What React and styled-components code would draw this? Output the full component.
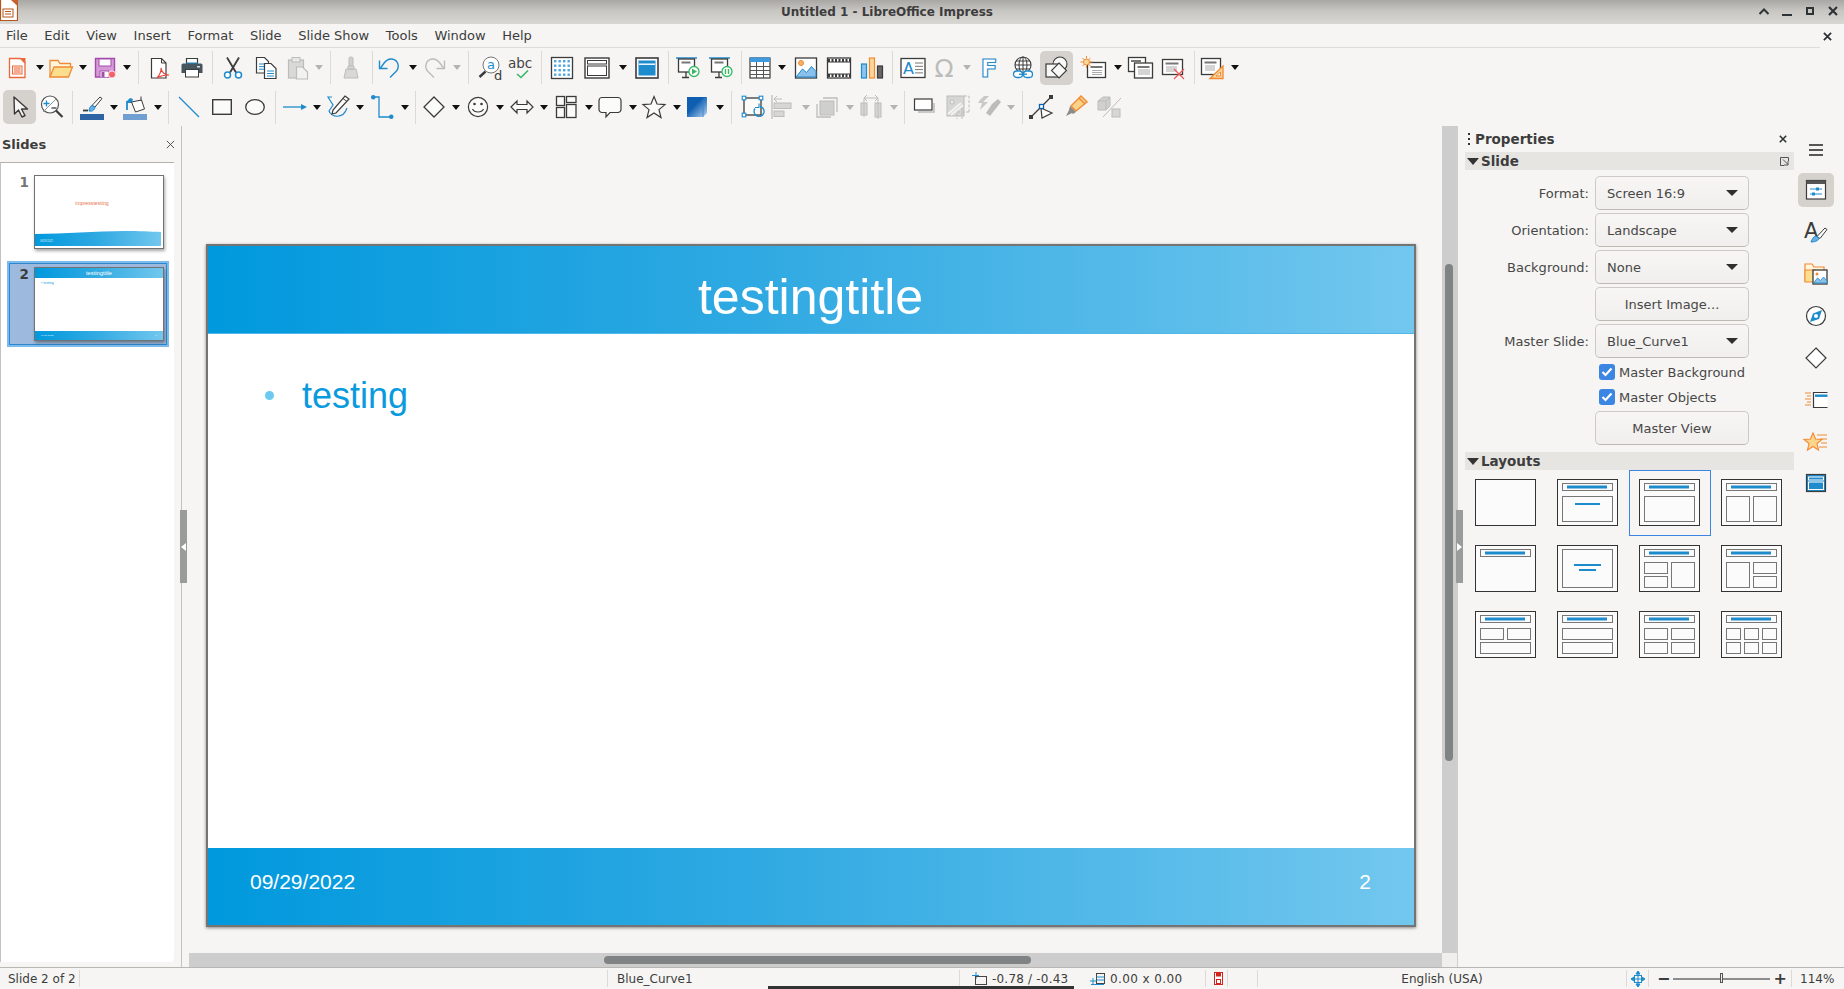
import React from 'react'
import styled, { createGlobalStyle } from 'styled-components'

const BLUE = '#1e8bcd'
const DARK = '#3b3b3b'
const DIM = '#bcbcba'
const ORANGE = '#f08a35'
const RED = '#e8443c'
const GREEN = '#37b866'
const SLIDE_GRADIENT = 'linear-gradient(90deg, #0099dd 0%, #2fa9e2 45%, #72c7ee 100%)'

const GlobalStyle = createGlobalStyle`
  html, body { margin: 0; padding: 0; height: 100%; overflow: hidden; }
  body { font-family: "DejaVu Sans", sans-serif; font-size: 13px; color: #3d3d3d; background: #f6f5f3; }
`

const Window = styled.div`
  position: relative;
  display: flex;
  flex-direction: column;
  width: 1844px;
  height: 989px;
  overflow: hidden;
  background: #f6f5f3;
`

const TitleBar = styled.header`
  position: relative;
  display: flex;
  align-items: center;
  justify-content: center;
  flex: none;
  height: 24px;
  padding-right: 70px;
  background: linear-gradient(180deg, #a8a7a4 0%, #c8c6c3 45%, #d9d7d4 100%);
  font-weight: 700;
  font-size: 12px;
  color: #3c3c3c;
`

const AppBadge = styled.svg`
  position: absolute;
  left: 0;
  top: 0;
`

const WindowButtons = styled.div`
  position: absolute;
  right: 0;
  top: 0;
  display: flex;
  height: 24px;
`

const WindowButton = styled.div`
  display: flex;
  align-items: center;
  justify-content: center;
  width: 23px;
  height: 22px;
`

const MenuBar = styled.nav`
  position: relative;
  display: flex;
  align-items: center;
  flex: none;
  height: 23px;
  padding-left: 6px;
  gap: 16.6px;
  &::after {
    content: '';
    position: absolute;
    left: 0;
    bottom: -1px;
    width: 1820px;
    height: 1px;
    background: #dedcd9;
  }
`

const MenuItem = styled.span`
  color: #3d3d3d;
`

const DocClose = styled.div`
  position: absolute;
  left: 1823px;
  top: 8px;
  display: flex;
`

const ToolRow = styled.div`
  display: flex;
  align-items: center;
  flex: none;
  height: ${p => p.$h}px;
`

const Slot = styled.div`
  display: flex;
  align-items: center;
  justify-content: center;
  flex: none;
  width: ${p => p.$w}px;
  margin-left: ${p => p.$gap}px;
  height: ${p => (p.$active ? 34 : 24)}px;
  background: ${p => (p.$active ? '#d5d1cc' : 'transparent')};
  border-radius: ${p => (p.$active ? 5 : 0)}px;
`

const ToolSep = styled.div`
  flex: none;
  width: 1px;
  margin-left: ${p => p.$gap}px;
  height: 33px;
  background: #dcdad7;
`

const Caret = styled.div`
  flex: none;
  width: 0;
  height: 0;
  margin-left: ${p => p.$gap}px;
  border-left: 4px solid transparent;
  border-right: 4px solid transparent;
  border-top: 5px solid ${p => (p.$dim ? '#b4b4b2' : '#111')};
`

const Main = styled.main`
  display: flex;
  flex: 1;
  min-height: 0;
`

const SlidesPanel = styled.aside`
  display: flex;
  flex-direction: column;
  flex: none;
  width: 181px;
  border-right: 1px solid #c4c2bf;
`

const SlidesHead = styled.div`
  display: flex;
  align-items: center;
  justify-content: space-between;
  flex: none;
  height: 36px;
  padding: 0 6px 0 2px;
  font-weight: 700;
`

const SlideList = styled.div`
  flex: none;
  width: 174px;
  height: 800px;
  padding-top: 12px;
  box-sizing: border-box;
  background: #fff;
  border-top: 1px solid #b3b1ae;
  border-left: 1px solid #c4c2bf;
  border-radius: 0 0 4px 0;
`

const SlideEntry = styled.div`
  display: flex;
  align-items: flex-start;
  box-sizing: border-box;
  width: 160px;
  margin-left: 7px;
  margin-bottom: 13px;
  height: ${p => (p.$selected ? 84 : 74)}px;
  padding-top: ${p => (p.$selected ? 3 : 0)}px;
  background: ${p => (p.$selected ? '#9dbade' : 'transparent')};
  border: ${p => (p.$selected ? '2px solid #2f86cf' : '0')};
  outline: ${p => (p.$selected ? '2px solid #7cbcec' : '0')};
  outline-offset: -1px;
`

const SlideNo = styled.span`
  flex: none;
  width: ${p => (p.$selected ? 24 : 26)}px;
  padding-right: 5px;
  box-sizing: border-box;
  text-align: right;
  font-weight: 700;
  font-size: 13.5px;
  line-height: 14px;
  color: ${p => (p.$selected ? '#3c3c3c' : '#757575')};
`

const Mini = styled.div`
  position: relative;
  display: flex;
  flex-direction: column;
  flex: none;
  box-sizing: border-box;
  width: 130px;
  height: 74px;
  background: #fff;
  border: 1px solid #727272;
  box-shadow: 1px 2px 3px rgba(0, 0, 0, 0.35);
`

const MiniHead = styled.div`
  flex: none;
  height: 10px;
  background: ${SLIDE_GRADIENT};
  color: #fff;
  font: 5.8px/10px "Liberation Sans", sans-serif;
  text-align: center;
`

const MiniBody = styled.div`
  flex: 1;
  padding: 2px 0 0 6px;
  color: #1ba0e2;
  font: 3.6px/6px "Liberation Sans", sans-serif;
`

const MiniTitle = styled.div`
  flex: 1;
  padding: 24px 14px 0 0;
  text-align: center;
  color: #e8744c;
  font: 5.2px/6px "Liberation Sans", sans-serif;
`

const MiniFoot = styled.div`
  display: flex;
  align-items: center;
  justify-content: space-between;
  flex: none;
  height: 9px;
  padding: 0 6px;
  background: ${SLIDE_GRADIENT};
  color: #d8f0fb;
  font: 2.5px/9px "Liberation Sans", sans-serif;
`

const MiniWave = styled.svg`
  position: absolute;
  left: 0;
  bottom: 2px;
`

const Canvas = styled.section`
  flex: 1;
  min-width: 0;
  display: flex;
  flex-direction: column;
`

const CanvasTop = styled.div`
  display: flex;
  flex: 1;
  min-height: 0;
`

const CanvasView = styled.div`
  flex: 1;
  padding: 118px 0 0 24px;
`

const Slide = styled.article`
  display: flex;
  flex-direction: column;
  box-sizing: border-box;
  width: 1210px;
  height: 683px;
  background: #fff;
  border: 2px solid #747474;
  box-shadow: 0 1px 3px rgba(0, 0, 0, 0.45);
  font-family: "Liberation Sans", Arial, sans-serif;
`

const SlideHeader = styled.div`
  flex: none;
  box-sizing: border-box;
  height: 88px;
  padding: 16px 1px 0 0;
  background: ${SLIDE_GRADIENT};
  border-bottom: 1px solid #4fb8e8;
  color: #fff;
  font-size: 50px;
  line-height: 70px;
  text-align: center;
`

const SlideBody = styled.div`
  display: flex;
  align-items: flex-start;
  flex: 1;
  padding: 41px 0 0 57px;
  gap: 28px;
  color: #0a9ade;
  font-size: 36px;
  line-height: 41px;
`

const Bullet = styled.span`
  flex: none;
  width: 9px;
  height: 9px;
  margin-top: 16px;
  border-radius: 50%;
  background: #6ccaf0;
`

const SlideFooter = styled.div`
  display: flex;
  align-items: center;
  justify-content: space-between;
  flex: none;
  box-sizing: border-box;
  height: 77px;
  padding: 0 43px 10px 42px;
  background: ${SLIDE_GRADIENT};
  color: #fff;
  font-size: 21px;
`

const HScrollRow = styled.div`
  display: flex;
  flex: none;
  height: 14px;
  margin-left: 7px;
`

const HTrack = styled.div`
  flex: 1;
  display: flex;
  align-items: center;
  background: #cdcdcd;
  padding-left: 415px;
`

const HThumb = styled.div`
  width: 427px;
  height: 8px;
  border-radius: 4px;
  background: #7f8383;
`

const Corner = styled.div`
  flex: none;
  width: 15px;
  background: #f0efed;
`

const VScroll = styled.div`
  flex: none;
  box-sizing: border-box;
  width: 15px;
  padding: 138px 0 0 3px;
  background: #cdcdcd;
`

const VThumb = styled.div`
  width: 8px;
  height: 497px;
  border-radius: 4px;
  background: #7f8383;
`

const Handle = styled.div`
  position: absolute;
  top: 510px;
  left: ${p => p.$left}px;
  display: flex;
  align-items: center;
  justify-content: center;
  width: 7px;
  height: 73px;
  background: #9a9c9c;
  &::after {
    content: '';
    border-top: 4px solid transparent;
    border-bottom: 4px solid transparent;
    ${p => (p.$flip ? 'border-left: 5px solid #fff;' : 'border-right: 5px solid #fff;')}
  }
`

const Sidebar = styled.aside`
  display: flex;
  flex: none;
  box-sizing: border-box;
  width: 387px;
  border-left: 1px solid #d0cecb;
`

const Deck = styled.div`
  flex: none;
  width: 329px;
  padding-left: 7px;
`

const DeckTitle = styled.div`
  display: flex;
  align-items: center;
  box-sizing: border-box;
  width: 329px;
  height: 26px;
  padding: 0 7px 0 3px;
  gap: 5px;
  font-weight: 700;
  font-size: 13.5px;
`

const Grip = styled.span`
  flex: none;
  width: 2px;
  height: 12px;
  background: repeating-linear-gradient(180deg, #333 0 2px, transparent 2px 5px);
`

const DeckName = styled.span`
  flex: 1;
`

const SectionHead = styled.div`
  display: flex;
  align-items: center;
  justify-content: space-between;
  box-sizing: border-box;
  width: 329px;
  height: 18px;
  padding: 0 4px 0 2px;
  background: #e6e5e2;
  font-weight: 700;
  font-size: 13.5px;
`

const SectionLabel = styled.span`
  display: flex;
  align-items: center;
  gap: 2px;
  &::before {
    content: '';
    border-left: 6px solid transparent;
    border-right: 6px solid transparent;
    border-top: 7px solid #333;
  }
`

const Form = styled.div`
  display: grid;
  grid-template-columns: 124px 154px;
  column-gap: 6px;
  row-gap: 3px;
  padding: 6px 0 7px;
`

const FieldLabel = styled.label`
  display: flex;
  align-items: center;
  justify-content: flex-end;
  color: #474747;
`

const Control = styled.div`
  grid-column: 2;
  display: flex;
  align-items: center;
  justify-content: ${p => (p.$center ? 'center' : 'space-between')};
  box-sizing: border-box;
  height: 34px;
  padding: ${p => (p.$center ? '0' : '0 10px 0 11px')};
  background: linear-gradient(180deg, #f7f6f4, #f0efed);
  border: 1px solid #cdcac5;
  border-bottom-color: #bdb9b3;
  border-radius: 5px;
  color: #474747;
`

const SelectArrow = styled.span`
  border-left: 6px solid transparent;
  border-right: 6px solid transparent;
  border-top: 6px solid #2f2f2f;
`

const CheckRow = styled.div`
  grid-column: 2;
  display: flex;
  align-items: center;
  gap: 4px;
  height: 22px;
  padding-left: 4px;
  color: #474747;
`

const CheckBox = styled.span`
  display: flex;
  align-items: center;
  justify-content: center;
  flex: none;
  width: 16px;
  height: 16px;
  border-radius: 3px;
  background: #3b85e3;
`

const LayoutGrid = styled.div`
  display: grid;
  grid-template-columns: repeat(4, 82px);
  grid-auto-rows: 66px;
`

const LayoutCell = styled.div`
  display: flex;
  align-items: center;
  justify-content: center;
  box-sizing: border-box;
  border: 1px solid ${p => (p.$selected ? '#3b85e3' : 'transparent')};
  padding: 0 1px 1px 0;
`

const TabBar = styled.div`
  display: flex;
  flex-direction: column;
  align-items: center;
  flex: none;
  width: 44px;
`

const TabButton = styled.div`
  display: flex;
  align-items: center;
  justify-content: center;
  flex: none;
  box-sizing: border-box;
  width: 36px;
  height: ${p => p.$h || 42}px;
  margin-bottom: ${p => p.$mb || 0}px;
  background: ${p => (p.$active ? '#d5d1cc' : 'transparent')};
  border-radius: 5px;
`

const StatusBar = styled.footer`
  display: flex;
  align-items: center;
  flex: none;
  height: 21px;
  border-top: 1px solid #b9b7b4;
  font-size: 12px;
  color: #3d3d3d;
`

const StatusCell = styled.div`
  display: flex;
  align-items: center;
  justify-content: ${p => p.$justify || 'flex-start'};
  flex: none;
  box-sizing: border-box;
  width: ${p => p.$w}px;
  height: 17px;
  padding-left: ${p => p.$pad || 0}px;
  gap: ${p => p.$gap || 0}px;
  letter-spacing: ${p => p.$track || 0}px;
  border-right: ${p => (p.$plain ? '0' : '1px solid #dcdad7')};
`

const ZoomSlider = styled.div`
  position: relative;
  flex: none;
  width: 97px;
  height: 2px;
  margin: 0 3px;
  background: #8d8d8d;
  &::after {
    content: '';
    position: absolute;
    left: 47px;
    top: -5px;
    width: 3px;
    height: 10px;
    box-sizing: border-box;
    border: 1px solid #555;
    background: #eee;
  }
`

const ZoomSign = styled.span`
  font-size: 16px;
  font-weight: 700;
  line-height: 17px;
`

const TaskStrip = styled.div`
  position: absolute;
  left: 768px;
  bottom: 0;
  width: 306px;
  height: 3px;
  background: #333;
`

/* toolbar icons: all drawn on a 24 box */
const Ico = ({ children, size = 24, w, h, box }) => (
  <svg width={w || size} height={h || size} viewBox={box || '0 0 24 24'} fill="none" style={{ overflow: 'visible', flex: 'none' }}>
    {children}
  </svg>
)

const Lines = ({ x, y, w, n = 3, c = DARK, step = 2.5 }) => (
  <>
    {Array.from({ length: n }, (_, i) => (
      <path key={i} d={`M${x} ${y + i * step}h${w}`} stroke={c} strokeWidth="1" />
    ))}
  </>
)

const icons = {
  newDoc: (
    <Ico>
      <path d="M4.5 2.5h11l4.5 4.5v14.5H4.5z" fill="#fff" stroke="#e9683c" strokeWidth="1.3" />
      <path d="M15 2h5.5v5.5z" fill="#e9683c" />
      <rect x="7.5" y="10" width="9.5" height="8" stroke="#e9683c" strokeWidth="1" fill="#fdeee8" />
      <Lines x={9} y={12} w={6.5} n={3} c="#e9683c" step={2} />
    </Ico>
  ),
  open: (
    <Ico>
      <path d="M1 21V4.5h8l2 3h10.5V11" stroke={ORANGE} strokeWidth="1.3" fill="#fff6dc" />
      <path d="M1 21l4-10h18.5l-4 10z" fill="#fbdf8f" stroke={ORANGE} strokeWidth="1.3" />
    </Ico>
  ),
  save: (
    <Ico>
      <path d="M2.5 2.5h19v15l-3 3.5H2.5z" fill="#d79ad8" stroke="#a34dab" strokeWidth="1.4" />
      <rect x="6" y="3" width="12" height="7" fill="#fff" stroke="#a34dab" />
      <path d="M7 21v-6h9v6" fill="#fff" stroke="#a34dab" />
      <rect x="8.5" y="16" width="3" height="5" fill="#a34dab" />
      <circle cx="19" cy="18.5" r="3.6" fill="#f0636a" stroke="#fff" strokeWidth=".8" />
    </Ico>
  ),
  pdf: (
    <Ico>
      <path d="M4.5 2.5h10l4.5 4.5v15H4.5z" fill="#fff" stroke={DARK} strokeWidth="1.2" />
      <path d="M14.5 2.5v4.5h4.5" stroke={DARK} />
      <path d="M10 22c3-3 4.5-8 4-10 0 4 4 7 8 7-4 0-9 1-12 3z" stroke={RED} strokeWidth="1.2" fill="#fff" />
    </Ico>
  ),
  print: (
    <Ico>
      <path d="M6.5 8V2.5h11V8" fill="#fff" stroke={DARK} strokeWidth="1.2" />
      <path d="M6.5 6.5h11V8h-11z" fill={BLUE} />
      <path d="M1.5 9c0-1 1-1.5 2-1.5h17c1 0 2 .5 2 1.5v8h-21z" fill="#47555f" />
      <rect x="5.5" y="13.5" width="13" height="7.5" fill="#fff" stroke={DARK} />
      <rect x="17" y="10" width="3" height="1.5" fill="#ddd" />
    </Ico>
  ),
  cut: (
    <Ico>
      <path d="M6 1.5l9 15M18 1.5l-9 15" stroke={DARK} strokeWidth="1.8" />
      <circle cx="6.5" cy="19" r="3" fill="#fff" stroke={BLUE} strokeWidth="1.5" />
      <circle cx="17.5" cy="19" r="3" fill="#fff" stroke={BLUE} strokeWidth="1.5" />
    </Ico>
  ),
  copy: (
    <Ico>
      <path d="M2.5 1.5h8l4 4V17H2.5z" fill="#fff" stroke={DARK} strokeWidth="1.2" />
      <Lines x={5} y={8} w={6} n={3} c={BLUE} step={2.6} />
      <path d="M10.5 7.5H17l5 5v10H10.5z" fill="#fff" stroke={DARK} strokeWidth="1.2" />
      <Lines x={13} y={15} w={7} n={3} c={BLUE} step={2.5} />
    </Ico>
  ),
  paste: (
    <Ico>
      <rect x="2.5" y="4" width="15" height="18" fill="#d9d9d7" stroke={DIM} strokeWidth="1.2" />
      <rect x="6" y="1.5" width="8" height="4.5" fill="#e8e8e6" stroke={DIM} />
      <path d="M10.5 11h6l5 5v7h-11z" fill="#f2f2f0" stroke={DIM} strokeWidth="1.2" />
    </Ico>
  ),
  clone: (
    <Ico>
      <rect x="10" y="1" width="4" height="9" rx="1.5" fill="#d0d0ce" stroke={DIM} />
      <path d="M9 10h6v3H9zM7 13h10l2 9H5z" fill="#d8d8d6" stroke={DIM} />
    </Ico>
  ),
  undo: (
    <Ico>
      <path d="M12 21.5l6-6c4-4 2.5-11.5-4-12.5-3-.4-5.5 1-7.5 3.5L2.5 12" stroke={BLUE} strokeWidth="1.4" />
      <path d="M1.5 4.5v8h8" stroke={BLUE} strokeWidth="1.4" />
    </Ico>
  ),
  redo: (
    <Ico>
      <path d="M12 21.5l-6-6c-4-4-2.5-11.5 4-12.5 3-.4 5.5 1 7.5 3.5L21.5 12" stroke={DIM} strokeWidth="1.4" />
      <path d="M22.5 4.5v8h-8" stroke={DIM} strokeWidth="1.4" />
    </Ico>
  ),
  find: (
    <Ico>
      <circle cx="13" cy="9" r="8" fill="#fff" stroke="#777" strokeWidth="1" />
      <path d="M7.5 15.5L1.5 21" stroke={DARK} strokeWidth="2.4" />
      <text x="9" y="13" fontSize="13" fill={BLUE} fontFamily="DejaVu Sans">a</text>
      <text x="16" y="24" fontSize="13" fill={DARK} fontFamily="DejaVu Sans">d</text>
    </Ico>
  ),
  spell: (
    <Ico>
      <text x="-1" y="12" fontSize="13.5" fill="#444" fontFamily="DejaVu Sans">abc</text>
      <path d="M8 18l4 3.5 7-7" stroke={GREEN} strokeWidth="1.6" />
    </Ico>
  ),
  grid: (
    <Ico>
      <rect x="1.5" y="1.5" width="21" height="21" fill="#fff" stroke={DARK} strokeWidth="1.3" />
      {[5, 9.5, 14, 18.5].map(y =>
        [5, 9.5, 14, 18.5].map(x => <rect key={`${x}-${y}`} x={x - 1} y={y - 1} width="2.4" height="2.4" fill="#4fa6e0" />)
      )}
    </Ico>
  ),
  header: (
    <Ico w={26} h={24} box="0 0 26 24">
      <rect x="1" y="2" width="24" height="20" fill="#fff" stroke={DARK} strokeWidth="1.4" />
      <rect x="3.5" y="4.5" width="19" height="3.5" stroke={DARK} />
      <rect x="3.5" y="10" width="19" height="9.5" stroke={DARK} />
    </Ico>
  ),
  master: (
    <Ico>
      <rect x="1" y="2" width="22" height="20" fill="#fff" stroke={DARK} strokeWidth="1.6" />
      <rect x="3.5" y="4.5" width="17" height="15" fill={BLUE} />
      <rect x="4" y="7.5" width="16" height="1.4" fill="#fff" />
    </Ico>
  ),
  start: (
    <Ico>
      <path d="M0 2h21" stroke={BLUE} strokeWidth="1.5" />
      <rect x="2.5" y="3" width="16" height="13" fill="#fff" stroke={DARK} strokeWidth="1.3" />
      <rect x="5.5" y="5.5" width="9" height="2" fill="#777" />
      <path d="M10 16v5M6 21.5h7" stroke={DARK} strokeWidth="1.3" />
      <circle cx="18" cy="15.5" r="5" fill="#fff" stroke={GREEN} strokeWidth="1.3" />
      <path d="M16 12.5l5 3-5 3z" fill={GREEN} />
    </Ico>
  ),
  pause: (
    <Ico>
      <path d="M0 2h21" stroke={BLUE} strokeWidth="1.5" />
      <rect x="2.5" y="3" width="16" height="13" fill="#fff" stroke={DARK} strokeWidth="1.3" />
      <rect x="5.5" y="5.5" width="9" height="2" fill="#777" />
      <path d="M10 16v5M6 21.5h7" stroke={DARK} strokeWidth="1.3" />
      <circle cx="18" cy="15.5" r="5" fill="#fff" stroke={GREEN} strokeWidth="1.3" />
      <path d="M16.5 13v5M19.5 13v5" stroke={GREEN} strokeWidth="1.4" />
    </Ico>
  ),
  table: (
    <Ico>
      <rect x="2" y="2" width="20" height="20" fill="#fff" stroke={DARK} strokeWidth="1.2" />
      <rect x="2" y="1.5" width="20" height="4.5" fill="#3f9ae0" />
      <path d="M2 10.5h20M2 14.5h20M2 18.5h20M8.5 6v16M15.5 6v16" stroke="#555" strokeWidth="1" />
    </Ico>
  ),
  image: (
    <Ico>
      <rect x="1.5" y="2" width="21" height="20" fill="#fff" stroke={DARK} strokeWidth="1.3" />
      <circle cx="7" cy="7" r="2.5" fill="#f7b267" stroke={ORANGE} />
      <path d="M2 21l6.5-8 4 3.5 5-6 4.5 5V21z" fill="#8ac0ea" stroke={BLUE} />
    </Ico>
  ),
  media: (
    <Ico>
      <rect x="0.5" y="2" width="23" height="20" fill="#fff" stroke={DARK} strokeWidth="1.3" />
      <path d="M1 4.5h22M1 19.5h22" stroke={DARK} strokeWidth="3" strokeDasharray="2 1.5" />
      <path d="M1 6h22M1 18h22" stroke={DARK} strokeWidth="1" />
    </Ico>
  ),
  chart: (
    <Ico>
      <rect x="1.5" y="8" width="5" height="14" fill="#8cc4ee" stroke={BLUE} strokeWidth="1.2" />
      <rect x="9.5" y="2" width="5" height="20" fill="#fbd59a" stroke={ORANGE} strokeWidth="1.2" />
      <rect x="17.5" y="10" width="5" height="12" fill="#666" stroke={DARK} strokeWidth="1.2" />
    </Ico>
  ),
  textbox: (
    <Ico w={26} h={24} box="0 0 26 24">
      <rect x="1" y="2.5" width="24" height="19" fill="#fff" stroke={DARK} strokeWidth="1.3" />
      <text x="3" y="18" fontSize="16" fill={BLUE} fontFamily="DejaVu Sans">A</text>
      <Lines x={15} y={7} w={8} n={4} c="#777" step={3.3} />
    </Ico>
  ),
  omega: (
    <Ico>
      <text x="12" y="21" textAnchor="middle" fontSize="25" fill={DIM} fontFamily="DejaVu Sans">Ω</text>
    </Ico>
  ),
  fontwork: (
    <Ico>
      <text x="12" y="21" textAnchor="middle" fontSize="25" fontWeight="700" fill="#fff" stroke={BLUE} strokeWidth="1.1" fontFamily="DejaVu Sans">F</text>
    </Ico>
  ),
  link: (
    <Ico>
      <circle cx="12" cy="9" r="8" fill="#fff" stroke={DARK} strokeWidth="1.1" />
      <ellipse cx="12" cy="9" rx="4" ry="8" stroke={DARK} />
      <path d="M4 9h16M5 5h14M5 13h14M12 1v16" stroke={DARK} />
      <rect x="2.5" y="15" width="9" height="6.5" rx="3.2" fill="#fff" stroke={BLUE} strokeWidth="1.3" />
      <rect x="12.5" y="15" width="9" height="6.5" rx="3.2" fill="#fff" stroke={BLUE} strokeWidth="1.3" />
      <path d="M8 18.2h8" stroke={BLUE} strokeWidth="1.3" />
    </Ico>
  ),
  shapes: (
    <Ico>
      <circle cx="15" cy="8" r="7" fill="#f8f8f7" stroke={DARK} strokeWidth="1.1" />
      <rect x="1" y="8" width="13" height="13" fill="#f8f8f7" stroke={DARK} strokeWidth="1.2" />
      <path d="M14 7l7.5 7.5L14 22l-7.5-7.5z" fill="#f8f8f7" stroke={DARK} strokeWidth="1.1" />
    </Ico>
  ),
  newSlide: (
    <Ico w={26} h={24} box="0 0 26 24">
      <rect x="6.5" y="6.5" width="18" height="15" fill="#fff" stroke={DARK} strokeWidth="1.3" />
      <rect x="9.5" y="10" width="12" height="2" fill="#777" />
      <Lines x={11} y={14.5} w={10} n={3} c="#aaa" step={2} />
      <circle cx="5.5" cy="6" r="3" fill="#fbd59a" stroke={ORANGE} />
      <path d="M5.5 0v2.5M5.5 9.5V12M-.5 6H2M9 6h2.5M1.5 2l1.8 1.8M7.7 8.2l1.8 1.8M1.5 10l1.8-1.8M7.7 3.8L9.5 2" stroke={ORANGE} />
    </Ico>
  ),
  dupSlide: (
    <Ico w={26} h={24} box="0 0 26 24">
      <rect x="0.5" y="1.5" width="17" height="14" fill="#fff" stroke={DARK} strokeWidth="1.3" />
      <rect x="3" y="4" width="10" height="2" fill="#777" />
      <rect x="6.5" y="7" width="18" height="15" fill="#fff" stroke={DARK} strokeWidth="1.3" />
      <rect x="9.5" y="10" width="12" height="2" fill="#777" />
      <Lines x={10} y={14} w={12} n={3} c="#aaa" step={2} />
    </Ico>
  ),
  delSlide: (
    <Ico w={26} h={24} box="0 0 26 24">
      <rect x="1.5" y="3.5" width="20" height="15" fill="#fff" stroke={DARK} strokeWidth="1.3" />
      <rect x="4.5" y="6.5" width="13" height="2" fill="#777" />
      <Lines x={5} y={11} w={11} n={3} c="#aaa" step={2} />
      <path d="M13 13l10 10M23 13L13 23" stroke="#ee5a5a" strokeWidth="1.3" />
    </Ico>
  ),
  slideLayout: (
    <Ico w={26} h={24} box="0 0 26 24">
      <rect x="1.5" y="2.5" width="19" height="16" fill="#fff" stroke={DARK} strokeWidth="1.3" />
      <rect x="4.5" y="5.5" width="12" height="2" fill="#777" />
      <Lines x={5} y={10} w={10} n={3} c="#aaa" step={2} />
      <path d="M10 22.5L23 10v12.5z" fill="#fbd59a" stroke={ORANGE} strokeWidth="1.3" />
      <path d="M16 20l4.5-4v4z" fill="#fff" stroke={ORANGE} />
    </Ico>
  ),
  select: (
    <Ico>
      <path d="M6 2l.5 17 4-4 3.5 7 3-1.5-3.5-6.5h6z" fill="#f6f5f3" stroke={DARK} strokeWidth="1.4" strokeLinejoin="round" />
    </Ico>
  ),
  zoom: (
    <Ico>
      <circle cx="10" cy="9.5" r="8.5" fill="#fff" stroke="#555" strokeWidth="1.2" />
      <path d="M3 17L17 3" stroke="#999" />
      <path d="M3.5 8.5h6M6.5 5.5v6" stroke={BLUE} strokeWidth="1.3" />
      <path d="M11.5 13h5" stroke={DARK} strokeWidth="1.3" />
      <path d="M16 15.5l6.5 6.5" stroke={DARK} strokeWidth="2.2" />
    </Ico>
  ),
  lineColor: (
    <Ico>
      <rect x="0" y="19" width="24" height="6" fill="#2f64a4" />
      <path d="M3 15.5h5" stroke={DARK} strokeWidth="1.8" />
      <path d="M20 2l2 1.5L15 12l-3-1.5z" fill="#fff" stroke={DARK} />
      <path d="M9 16c0-3 2-5.5 3-5.5l3 1.5c0 2-2 5-6 4z" fill="#6aaee5" stroke={BLUE} />
    </Ico>
  ),
  fill: (
    <Ico>
      <rect x="0" y="19" width="24" height="6" fill="#729fd2" />
      <path d="M4 15V7h5" stroke={BLUE} strokeWidth="1.8" />
      <path d="M3 7l4-4 3 1-1 3" fill={BLUE} />
      <path d="M8.5 7l10-2 3 9-9 3z" fill="#fff" stroke={DARK} />
      <path d="M18 6V1.5" stroke={DARK} />
    </Ico>
  ),
  line: (
    <Ico>
      <path d="M2 2l20 20" stroke={BLUE} strokeWidth="1.2" />
    </Ico>
  ),
  rect: (
    <Ico w={20} h={16} box="0 0 20 16">
      <rect x="0.7" y="0.7" width="18.6" height="14.6" fill="#fbfbfa" stroke={DARK} strokeWidth="1.4" />
    </Ico>
  ),
  ellipse: (
    <Ico w={20} h={16} box="0 0 20 16">
      <ellipse cx="10" cy="8" rx="9.3" ry="7.3" fill="#fbfbfa" stroke={DARK} strokeWidth="1.3" />
    </Ico>
  ),
  arrowLine: (
    <Ico>
      <path d="M0 12h20" stroke={BLUE} strokeWidth="1.3" />
      <path d="M24 12l-6-3v6z" fill={BLUE} />
    </Ico>
  ),
  curve: (
    <Ico>
      <path d="M5 2H1l5 8-4 6c2 6 14 9 18-3" stroke={BLUE} strokeWidth="1.2" />
      <path d="M18 1l4 3-13 14-4 1 1-4z" fill="#fff" stroke={DARK} strokeWidth="1.2" />
      <path d="M16 3.5l4 3" stroke={DARK} />
    </Ico>
  ),
  connector: (
    <Ico>
      <path d="M3 2h6v20h11" stroke={BLUE} strokeWidth="1.3" />
      <rect x="1" y="0" width="4.5" height="4.5" rx="2.2" fill={BLUE} />
      <rect x="19" y="19.5" width="4.5" height="4.5" rx="2.2" fill={BLUE} />
    </Ico>
  ),
  diamond: (
    <Ico>
      <path d="M12 2l10 10-10 10L2 12z" fill="#fbfbfa" stroke={DARK} strokeWidth="1.3" />
    </Ico>
  ),
  smiley: (
    <Ico>
      <circle cx="12" cy="12" r="9.6" fill="#fbfbfa" stroke={DARK} strokeWidth="1.2" />
      <circle cx="8.5" cy="9" r="1.3" fill={DARK} />
      <circle cx="15.5" cy="9" r="1.3" fill={DARK} />
      <path d="M6.5 14c2 4 9 4 11 0" stroke={DARK} strokeWidth="1.2" />
    </Ico>
  ),
  dblArrow: (
    <Ico>
      <path d="M1 12l6-6v3.5h10V6l6 6-6 6v-3.5H7V18z" fill="#fbfbfa" stroke={DARK} strokeWidth="1.2" />
    </Ico>
  ),
  flow: (
    <Ico>
      <rect x="2.5" y="1.5" width="8" height="9" fill="#fbfbfa" stroke={DARK} strokeWidth="1.3" />
      <rect x="12.5" y="1.5" width="9.5" height="6" fill="#fbfbfa" stroke={DARK} strokeWidth="1.3" />
      <rect x="2.5" y="12.5" width="8" height="10" fill="#fbfbfa" stroke={DARK} strokeWidth="1.3" />
      <rect x="12.5" y="9.5" width="9.5" height="13" fill="#fbfbfa" stroke={DARK} strokeWidth="1.3" />
    </Ico>
  ),
  callout: (
    <Ico>
      <path d="M4 2.5h16c1.5 0 3 1.5 3 3v9c0 1.5-1.5 3-3 3H12l-4 4.5v-4.5H4c-1.5 0-3-1.5-3-3v-9c0-1.5 1.5-3 3-3z" fill="#fbfbfa" stroke={DARK} strokeWidth="1.2" />
    </Ico>
  ),
  star: (
    <Ico>
      <path d="M12 1.5l3 7.5 8 .6-6 5 2 8L12 18l-7 4.6 2-8-6-5L9 9z" fill="#fbfbfa" stroke={DARK} strokeWidth="1.2" />
    </Ico>
  ),
  extrude3d: (
    <Ico>
      <defs>
        <linearGradient id="cube3d" x1="0" y1="0" x2="1" y2="1">
          <stop offset="0.4" stopColor="#0f5fb0" />
          <stop offset="1" stopColor="#b5d4f0" />
        </linearGradient>
      </defs>
      <path d="M1 2h20v16l-4 4H1z" fill="url(#cube3d)" />
      <path d="M17 22V6l4-4" stroke="#3a80c8" strokeWidth=".8" />
    </Ico>
  ),
  rotate: (
    <Ico>
      <rect x="3" y="3" width="17" height="17" fill="#fbfbfa" stroke={DARK} strokeWidth="1.3" />
      {[[3, 3], [20, 3], [3, 20]].map(([x, y]) => (
        <rect key={`${x}${y}`} x={x - 1.8} y={y - 1.8} width="3.6" height="3.6" fill="#fff" stroke={BLUE} strokeWidth="1.1" />
      ))}
      <path d="M19 11.5a5 5 0 1 1-5 2" stroke={BLUE} strokeWidth="1.3" />
      <path d="M18 8.5v4h-4" stroke={BLUE} strokeWidth="1.1" />
    </Ico>
  ),
  align: (
    <Ico>
      <path d="M1 0v24" stroke={DIM} strokeWidth="1.3" />
      <rect x="3" y="8" width="17" height="5.5" fill="#d6d6d4" stroke={DIM} />
      <rect x="3" y="16" width="10" height="5.5" fill="#d6d6d4" stroke={DIM} />
      <path d="M11 4H3M6 1L3 4l3 3" stroke={DIM} />
    </Ico>
  ),
  arrange: (
    <Ico>
      <path d="M8 3h14v14M2 9v13h14" stroke={DIM} strokeWidth="1.3" />
      <rect x="5" y="6" width="14" height="14" fill="#cfcfcd" stroke={DIM} />
    </Ico>
  ),
  distribute: (
    <Ico>
      <rect x="2" y="8" width="6" height="12" fill="#d6d6d4" stroke={DIM} />
      <rect x="16" y="8" width="6" height="14" fill="#d6d6d4" stroke={DIM} />
      <path d="M5 3v19M19 3v21M5 3h14M8 0L5 3l3 3M16 0l3 3-3 3" stroke={DIM} />
    </Ico>
  ),
  shadow: (
    <Ico>
      <path d="M21 8v9H5" stroke="#c9c9c7" strokeWidth="2" />
      <rect x="1.5" y="4" width="17.5" height="11" fill="#fff" stroke={DARK} strokeWidth="1.2" />
    </Ico>
  ),
  crop: (
    <Ico>
      <rect x="1" y="1" width="17" height="20" fill="#d6d6d4" stroke={DIM} />
      <circle cx="6" cy="7" r="2" fill="#eee" stroke={DIM} />
      <path d="M2 19L15 8M5 20l12-10" stroke="#f3f3f1" strokeWidth="2" />
      <path d="M18 1h5v16M23 17H11v7M16 13v11" stroke={DIM} strokeDasharray="3 1.5" />
    </Ico>
  ),
  filter: (
    <Ico>
      <path d="M15 9l6-5 3 3-11 14-4-3z" fill="#bcbcba" />
      <path d="M3 5l4-4h5l-6 6h5l-8 8 2-7H1z" fill="#c8c8c6" />
    </Ico>
  ),
  points: (
    <Ico>
      <path d="M1 22L21 2" stroke={DARK} strokeWidth="1.2" />
      <rect x="-1" y="20" width="4" height="4" fill={DARK} />
      <rect x="19" y="0" width="4" height="4" fill={DARK} />
      <path d="M11 13l11 5-10 5z" fill="#fbfbfa" stroke={DARK} strokeWidth="1.2" />
      <rect x="9.5" y="9.5" width="4" height="4" fill="#fff" stroke="#0b5fb0" strokeWidth="1.3" />
    </Ico>
  ),
  glue: (
    <Ico>
      <path d="M17 1l6 6-11 9-5-5z" fill="#fbd28a" stroke={ORANGE} strokeWidth="1.4" />
      <path d="M6 11l6 6-3 2-4-4zM5 15l3 3-6 3z" fill="#8a8a88" />
      <path d="M15 3l6 6" stroke={ORANGE} strokeWidth="1.5" />
    </Ico>
  ),
  extrusion: (
    <Ico>
      <path d="M1 6l5-4h7v9l-4 4H1z" fill="#d0d0ce" stroke={DIM} />
      <path d="M1 6h8v9M9 6l4-4" stroke={DIM} />
      <path d="M6 22L24 3" stroke={DIM} />
      <rect x="15" y="14" width="8" height="8" fill="#d6d6d4" stroke={DIM} />
    </Ico>
  )
}

const railIcons = {
  properties: (
    <Ico>
      <rect x="2.5" y="2.5" width="19" height="18.5" fill="#fff" stroke={DARK} strokeWidth="1.2" />
      <rect x="2.5" y="2.5" width="19" height="3.5" fill="#555" />
      <path d="M6 11h12M6 16h12" stroke={BLUE} />
      <rect x="12" y="9.5" width="3" height="3" fill={BLUE} />
      <rect x="8" y="14.5" width="3" height="3" fill={BLUE} />
    </Ico>
  ),
  styles: (
    <Ico>
      <text x="0" y="18" fontSize="21" fill={DARK} fontFamily="DejaVu Sans">A</text>
      <path d="M21 8l2 1.5-7 9-3-2z" fill="#fff" stroke={DARK} />
      <path d="M7 22c1-3 3-6 5-6l3 2c0 2-3 4-8 4z" fill="#6aaee5" stroke={BLUE} />
    </Ico>
  ),
  gallery: (
    <Ico>
      <path d="M1 20V2h7l2 3h10v5" fill="#fff6dc" stroke={ORANGE} strokeWidth="1.2" />
      <rect x="1" y="8" width="10" height="12" fill="#fbdf8f" stroke={ORANGE} />
      <rect x="9" y="8" width="14" height="14" fill="#fff" stroke={DARK} strokeWidth="1.3" />
      <circle cx="13" cy="12" r="1.5" fill={ORANGE} />
      <path d="M9.5 21l4-5 3 2.5 3-3.5 3.5 4v2z" fill="#8ac0ea" stroke={BLUE} strokeWidth=".8" />
    </Ico>
  ),
  navigator: (
    <Ico>
      <circle cx="12" cy="12" r="9.5" fill="#fff" stroke={DARK} strokeWidth="1.2" />
      <path d="M18 6l-9 3.5L6 18l9-3z" fill={BLUE} />
      <circle cx="12" cy="12" r="2" fill="#fff" />
    </Ico>
  ),
  shapes: (
    <Ico>
      <path d="M12 2l10 10-10 10L2 12z" fill="#fff" stroke={DARK} strokeWidth="1.2" />
    </Ico>
  ),
  animation: (
    <Ico>
      <path d="M23.5 4.5h-14v15h14" fill="#fff" stroke={DARK} strokeWidth="1.2" />
      <rect x="11" y="6.5" width="12.5" height="2.4" fill={BLUE} />
      <path d="M1 5h6M3 8h4M1 11h6M3 14h4M1 17h6" stroke={ORANGE} />
    </Ico>
  ),
  transition: (
    <Ico>
      <path d="M9 3l2.5 6 6.5.5-5 4 1.5 6.5L9 16.5 3.5 20 5 13.5l-5-4L6.5 9z" fill="#fcd58d" stroke={ORANGE} strokeWidth="1.1" />
      <path d="M13 5h10M16 9h7M17 13h6M15 17h8" stroke={ORANGE} />
    </Ico>
  ),
  masterPages: (
    <Ico>
      <rect x="2.5" y="2.5" width="19" height="17" fill={BLUE} stroke={DARK} strokeWidth="1.2" />
      <rect x="4.5" y="5" width="15" height="3" fill={BLUE} stroke="#fff" />
      <rect x="4.5" y="10" width="15" height="7.5" fill={BLUE} stroke="#fff" />
    </Ico>
  )
}

const SLOT_W = 24

// each entry: [kind, centre x in the toolbar]
const withGaps = items => {
  let end = 0
  return items.map(([kind, cx]) => {
    const w = kind === 'sep' ? 1 : kind === 'arrow' || kind === 'dim' ? 8 : kind === 'shapes' || kind === 'select' ? 33 : SLOT_W
    const gap = Math.round(cx - w / 2 - end)
    end += gap + w
    return { kind, gap, w }
  })
}

const row1 = withGaps([
  ['newDoc', 17], ['arrow', 40], ['open', 61], ['arrow', 83], ['save', 105], ['arrow', 127], ['sep', 138],
  ['pdf', 159], ['print', 192], ['sep', 212], ['cut', 233], ['copy', 266], ['paste', 298], ['dim', 319], ['sep', 330],
  ['clone', 351], ['sep', 372], ['undo', 390], ['arrow', 413], ['redo', 434], ['dim', 457], ['sep', 468],
  ['find', 490], ['spell', 521], ['sep', 541], ['grid', 562], ['header', 597], ['arrow', 623], ['master', 647], ['sep', 668],
  ['start', 688], ['pause', 721], ['sep', 741], ['table', 760], ['arrow', 782], ['image', 806], ['media', 839], ['chart', 872], ['sep', 892],
  ['textbox', 913], ['omega', 944], ['dim', 967], ['fontwork', 989], ['link', 1023], ['shapes', 1056],
  ['newSlide', 1094], ['arrow', 1118], ['dupSlide', 1141], ['delSlide', 1174], ['sep', 1194], ['slideLayout', 1213], ['arrow', 1235]
])

const row2 = withGaps([
  ['select', 19], ['zoom', 52], ['sep', 72], ['lineColor', 92], ['arrow', 114], ['fill', 135], ['arrow', 158], ['sep', 168],
  ['line', 189], ['rect', 222], ['ellipse', 255], ['sep', 275], ['arrowLine', 295], ['arrow', 317], ['curve', 339], ['arrow', 360],
  ['connector', 382], ['arrow', 405], ['sep', 415], ['diamond', 434], ['arrow', 456], ['smiley', 478], ['arrow', 500],
  ['dblArrow', 522], ['arrow', 544], ['flow', 566], ['arrow', 589], ['callout', 610], ['arrow', 633], ['star', 654], ['arrow', 677],
  ['extrude3d', 698], ['arrow', 720], ['sep', 731], ['rotate', 753], ['align', 783], ['dim', 806], ['arrange', 827], ['dim', 850],
  ['distribute', 871], ['dim', 894], ['sep', 904], ['shadow', 925], ['crop', 958], ['filter', 989], ['dim', 1011], ['sep', 1022],
  ['points', 1042], ['glue', 1076], ['extrusion', 1109]
])

const Toolbar = ({ items, h }) => (
  <ToolRow $h={h}>
    {items.map(({ kind, gap, w }, i) => {
      if (kind === 'sep') return <ToolSep key={i} $gap={gap} />
      if (kind === 'arrow') return <Caret key={i} $gap={gap} />
      if (kind === 'dim') return <Caret key={i} $gap={gap} $dim />
      return (
        <Slot key={i} $gap={gap} $w={w} $active={w === 33}>
          {icons[kind]}
        </Slot>
      )
    })}
  </ToolRow>
)

// layout thumbnails: boxes are the grey placeholders, bars the blue strokes
const FULL_TITLE = { x: 5, y: 4, w: 50, h: 7 }
const layouts = [
  { boxes: [], bars: [] },
  { boxes: [FULL_TITLE, { x: 5, y: 17, w: 50, h: 25 }], bars: [[10, 7.5, 40], [18, 25, 25]] },
  { boxes: [FULL_TITLE, { x: 5, y: 17, w: 50, h: 25 }], bars: [[10, 7.5, 40]] },
  { boxes: [FULL_TITLE, { x: 5, y: 17, w: 23, h: 25 }, { x: 32, y: 17, w: 23, h: 25 }], bars: [[10, 7.5, 40]] },
  { boxes: [FULL_TITLE], bars: [[10, 7.5, 40]] },
  { boxes: [{ x: 5, y: 4, w: 50, h: 38 }], bars: [[17, 20, 27], [22, 25, 17]] },
  { boxes: [FULL_TITLE, { x: 5, y: 17, w: 23, h: 11 }, { x: 5, y: 31, w: 23, h: 11 }, { x: 32, y: 17, w: 23, h: 25 }], bars: [[10, 7.5, 40]] },
  { boxes: [FULL_TITLE, { x: 5, y: 17, w: 23, h: 25 }, { x: 32, y: 17, w: 23, h: 11 }, { x: 32, y: 31, w: 23, h: 11 }], bars: [[10, 7.5, 40]] },
  { boxes: [FULL_TITLE, { x: 5, y: 17, w: 23, h: 11 }, { x: 32, y: 17, w: 23, h: 11 }, { x: 5, y: 31, w: 50, h: 11 }], bars: [[10, 7.5, 40]] },
  { boxes: [FULL_TITLE, { x: 5, y: 17, w: 50, h: 11 }, { x: 5, y: 31, w: 50, h: 11 }], bars: [[10, 7.5, 40]] },
  { boxes: [FULL_TITLE, { x: 5, y: 17, w: 23, h: 11 }, { x: 32, y: 17, w: 23, h: 11 }, { x: 5, y: 31, w: 23, h: 11 }, { x: 32, y: 31, w: 23, h: 11 }], bars: [[10, 7.5, 40]] },
  {
    boxes: [
      FULL_TITLE,
      { x: 5, y: 17, w: 14, h: 11 }, { x: 23, y: 17, w: 14, h: 11 }, { x: 41, y: 17, w: 14, h: 11 },
      { x: 5, y: 31, w: 14, h: 11 }, { x: 23, y: 31, w: 14, h: 11 }, { x: 41, y: 31, w: 14, h: 11 }
    ],
    bars: [[10, 7.5, 40]]
  }
]

const LayoutThumb = ({ boxes, bars }) => (
  <svg width="61" height="47" viewBox="0 0 61 47">
    <rect x="0.5" y="0.5" width="60" height="46" fill="#fbfbfb" stroke="#333" />
    {boxes.map((b, i) => (
      <rect key={i} x={b.x + 0.5} y={b.y + 0.5} width={b.w} height={b.h} fill="none" stroke="#777" />
    ))}
    {bars.map(([x, y, w], i) => (
      <rect key={i} x={x} y={y - 1} width={w} height={w === 40 ? 3 : 2} fill="#1e8bcd" />
    ))}
  </svg>
)

const CloseMark = ({ size = 10, width = 1.8, color = '#2e3436' }) => (
  <svg width={size} height={size} viewBox="0 0 10 10">
    <path d="M1 1l8 8M9 1L1 9" stroke={color} strokeWidth={width} />
  </svg>
)

const Check = () => (
  <svg width="12" height="10" viewBox="0 0 12 10">
    <path d="M1.5 5l3 3 6-6.5" stroke="#fff" strokeWidth="2.2" fill="none" />
  </svg>
)

const menus = ['File', 'Edit', 'View', 'Insert', 'Format', 'Slide', 'Slide Show', 'Tools', 'Window', 'Help']
const rail = ['styles', 'gallery', 'navigator', 'shapes', 'animation', 'transition', 'masterPages']

export default function App() {
  return (
    <Window>
      <GlobalStyle />
      <TitleBar>
        <AppBadge width="18" height="24" viewBox="0 0 18 24">
          <path d="M.5-4h13l4 4v20.5H.5z" fill="#fff" stroke="#b5541c" strokeWidth="1.2" />
          <path d="M11 0l6.5 6V0z" fill="#c9602a" />
          <rect x="3" y="9" width="10" height="8" fill="#fff" stroke="#b5541c" />
          <path d="M5 11.5h6M5 14h6" stroke="#b5541c" />
        </AppBadge>
        Untitled 1 - LibreOffice Impress
        <WindowButtons>
          <WindowButton>
            <svg width="12" height="8" viewBox="0 0 12 8"><path d="M1.5 7L6 2.5 10.5 7" stroke="#2e3436" strokeWidth="2" fill="none" /></svg>
          </WindowButton>
          <WindowButton>
            <svg width="10" height="10" viewBox="0 0 10 10"><path d="M0 9h10" stroke="#2e3436" strokeWidth="2" /></svg>
          </WindowButton>
          <WindowButton>
            <svg width="8" height="8" viewBox="0 0 8 8"><rect x="1" y="1" width="6" height="6" fill="none" stroke="#2e3436" strokeWidth="2" /></svg>
          </WindowButton>
          <WindowButton>
            <CloseMark size={10} width={2.2} />
          </WindowButton>
        </WindowButtons>
      </TitleBar>

      <MenuBar>
        {menus.map(m => <MenuItem key={m}>{m}</MenuItem>)}
        <DocClose><CloseMark size={9} width={2} /></DocClose>
      </MenuBar>

      <Toolbar items={row1} h={41} />
      <Toolbar items={row2} h={38} />

      <Main>
        <SlidesPanel>
          <SlidesHead>
            Slides
            <CloseMark size={9} width={1} color="#444" />
          </SlidesHead>
          <SlideList>
            <SlideEntry>
              <SlideNo>1</SlideNo>
              <Mini>
                <MiniTitle>impresstesting</MiniTitle>
                <MiniWave width="126" height="15" viewBox="0 0 126 15" preserveAspectRatio="none">
                  <defs>
                    <linearGradient id="miniWave" x1="0" x2="1" y1="0" y2="0">
                      <stop offset="0" stopColor="#0099dd" />
                      <stop offset="0.5" stopColor="#2fa9e2" />
                      <stop offset="1" stopColor="#72c7ee" />
                    </linearGradient>
                  </defs>
                  <path d="M0 3c30 0 60-3 90-3 15 0 25 .5 36 1v14H0z" fill="url(#miniWave)" />
                  <text x="5" y="11" fontSize="2.6" fill="#d8f0fb" fontFamily="Liberation Sans">09/29/2022</text>
                </MiniWave>
              </Mini>
            </SlideEntry>
            <SlideEntry $selected>
              <SlideNo $selected>2</SlideNo>
              <Mini>
                <MiniHead>testingtitle</MiniHead>
                <MiniBody>•  testing</MiniBody>
                <MiniFoot><span>09/29/2022</span><span>2</span></MiniFoot>
              </Mini>
            </SlideEntry>
          </SlideList>
        </SlidesPanel>

        <Canvas>
          <CanvasTop>
            <CanvasView>
              <Slide>
                <SlideHeader>testingtitle</SlideHeader>
                <SlideBody>
                  <Bullet />
                  testing
                </SlideBody>
                <SlideFooter>
                  <span>09/29/2022</span>
                  <span>2</span>
                </SlideFooter>
              </Slide>
            </CanvasView>
            <VScroll><VThumb /></VScroll>
          </CanvasTop>
          <HScrollRow>
            <HTrack><HThumb /></HTrack>
            <Corner />
          </HScrollRow>
        </Canvas>

        <Sidebar>
          <Deck>
            <DeckTitle>
              <Grip />
              <DeckName>Properties</DeckName>
              <CloseMark size={8} width={2} />
            </DeckTitle>
            <SectionHead>
              <SectionLabel>Slide</SectionLabel>
              <svg width="11" height="11" viewBox="0 0 11 11">
                <path d="M9.5 5V1.5h-8v8H5M4 3.5l5 5M9 5v4H5" stroke="#555" fill="none" />
              </svg>
            </SectionHead>
            <Form>
              <FieldLabel>Format:</FieldLabel>
              <Control>Screen 16:9<SelectArrow /></Control>
              <FieldLabel>Orientation:</FieldLabel>
              <Control>Landscape<SelectArrow /></Control>
              <FieldLabel>Background:</FieldLabel>
              <Control>None<SelectArrow /></Control>
              <Control $center>Insert Image...</Control>
              <FieldLabel>Master Slide:</FieldLabel>
              <Control>Blue_Curve1<SelectArrow /></Control>
              <CheckRow><CheckBox><Check /></CheckBox>Master Background</CheckRow>
              <CheckRow><CheckBox><Check /></CheckBox>Master Objects</CheckRow>
              <Control $center>Master View</Control>
            </Form>
            <SectionHead>
              <SectionLabel>Layouts</SectionLabel>
            </SectionHead>
            <LayoutGrid>
              {layouts.map((l, i) => (
                <LayoutCell key={i} $selected={i === 2}>
                  <LayoutThumb boxes={l.boxes} bars={l.bars} />
                </LayoutCell>
              ))}
            </LayoutGrid>
          </Deck>
          <TabBar>
            <TabButton $h={47}>
              <svg width="14" height="12" viewBox="0 0 14 12"><path d="M0 1h14M0 6h14M0 11h14" stroke="#222" strokeWidth="1.6" /></svg>
            </TabButton>
            <TabButton $active $h={34} $mb={4}>{railIcons.properties}</TabButton>
            {rail.map(r => <TabButton key={r}>{railIcons[r]}</TabButton>)}
          </TabBar>
        </Sidebar>
      </Main>

      <StatusBar>
        <StatusCell $w={80} $pad={8}>Slide 2 of 2</StatusCell>
        <StatusCell $w={528} />
        <StatusCell $w={352} $pad={9}>Blue_Curve1</StatusCell>
        <StatusCell $w={130} $pad={12} $gap={4} $track={0.2} $plain>
          <svg width="16" height="14" viewBox="0 0 16 14">
            <path d="M4 0v7M0 3.5h7" stroke={BLUE} />
            <rect x="3.5" y="4.5" width="11" height="8" fill="none" stroke="#444" />
          </svg>
          -0.78 / -0.43
        </StatusCell>
        <StatusCell $w={116} $gap={4} $track={0.4}>
          <svg width="16" height="14" viewBox="0 0 16 14">
            <rect x="6.5" y="1.5" width="8" height="10" fill="none" stroke="#444" />
            <path d="M1 12.5h13M3 6v7M0 9h6M6.5 5h8M6.5 8h8" stroke={BLUE} />
          </svg>
          0.00 x 0.00
        </StatusCell>
        <StatusCell $w={22} $pad={4} $justify="center">
          <svg width="9" height="13" viewBox="0 0 9 13">
            <rect x=".5" y=".5" width="8" height="12" fill="#fff" stroke="#d0241c" />
            <rect x="2" y="1" width="5" height="3.5" fill="#d0241c" />
            <rect x="2.5" y="7.5" width="4" height="4" fill="none" stroke="#d0241c" />
          </svg>
        </StatusCell>
        <StatusCell $w={30} />
        <StatusCell $w={369} $justify="center">English (USA)</StatusCell>
        <StatusCell $w={22} $justify="center">
          <svg width="14" height="16" viewBox="0 0 14 16">
            <path d="M7 0v16M0 8h14M7 0L5 3h4zM7 16l-2-3h4zM0 8l3-2v4zM14 8l-3-2v4z" stroke={BLUE} fill={BLUE} strokeWidth="1" />
            <rect x="3.5" y="4.5" width="7" height="7" fill="none" stroke={BLUE} />
          </svg>
        </StatusCell>
        <StatusCell $w={143} $pad={8}>
          <ZoomSign>−</ZoomSign>
          <ZoomSlider />
          <ZoomSign>+</ZoomSign>
        </StatusCell>
        <StatusCell $w={52} $pad={8} $plain>114%</StatusCell>
      </StatusBar>

      <Handle $left={180} />
      <Handle $left={1456} $flip />
      <TaskStrip />
    </Window>
  )
}
